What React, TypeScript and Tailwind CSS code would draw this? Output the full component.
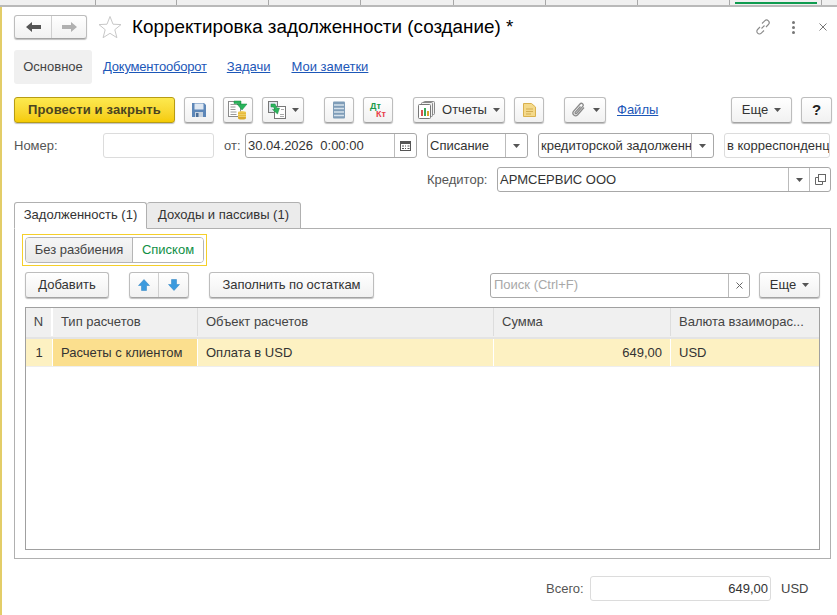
import React from "react";

const Caret = ({ c = "#555" }: { c?: string }) => (
  <svg width="7" height="4" viewBox="0 0 7 4" className="shrink-0"><path d="M0 0h7L3.5 4z" fill={c} /></svg>
);

const btn = "flex items-center justify-center h-[26px] rounded-[3px] border border-[#bdbdbd] border-b-[#a3a3a3] bg-gradient-to-b from-white to-[#f1f1f1] shadow-[0_1px_1px_rgba(0,0,0,0.25)] text-[#333] shrink-0";
const field = "flex items-center h-[25px] rounded-[3px] border bg-white text-[#333] shrink-0 overflow-hidden whitespace-nowrap";

const SaveIcon = () => (
  <svg width="16" height="16" viewBox="0 0 16 16"><path d="M1 1h12l2 2v12H1z" fill="#5d87b8" /><rect x="3.5" y="1.5" width="9" height="6" fill="#dfe8f2" /><rect x="4" y="10" width="8" height="5" fill="#c8d3df" /><rect x="5" y="11" width="2.5" height="4" fill="#4c6f98" /></svg>
);
const PostIcon = () => (
  <svg width="20" height="20" viewBox="0 0 20 20"><rect x="0.500" y="1.500" width="12" height="15" fill="#fff" stroke="#8a8a8a" /><path d="M2.500 4.500h8M2.500 7h5M2.500 9.500h5M2.500 12h6M2.500 14.500h6" stroke="#9a9a9a" /><path d="M6 1h7v3h-1l3 0h4l-5 6-5-6h2.500V3.500H6z" fill="#27b35a" stroke="#148a3f" strokeWidth=".5" /><ellipse cx="14" cy="12.500" rx="4" ry="1.500" fill="#f2cf5c" /><rect x="10" y="12.500" width="8" height="5.500" fill="#e7bb3c" /><ellipse cx="14" cy="18" rx="4" ry="1.500" fill="#d9a92c" /><path d="M10 14.500h8M10 16.500h8" stroke="#f4dc84" strokeWidth=".6" /></svg>
);
const CopyIcon = () => (
  <svg width="18" height="18" viewBox="0 0 18 18"><rect x="0.500" y="0.500" width="9" height="11" fill="#e3e8ee" stroke="#777" /><rect x="6.500" y="5.500" width="11" height="12" fill="#fff" stroke="#777" /><path d="M12 13.500h4M12 15.500h4M13 8.500h3" stroke="#aaa" /><path d="M3 3h4l2 4h2.500l-2 6-5-4.500H7L5.500 6H3z" fill="#2db45c" stroke="#178a41" strokeWidth=".5" /></svg>
);
const ListIcon = () => (
  <svg width="14" height="18" viewBox="0 0 14 18"><rect x="1" y="0.500" width="12" height="17" rx="1" fill="#7f9db8" /><path d="M2 4h10M2 7.500h10M2 11h10M2 14.500h10" stroke="#d6e2ec" strokeWidth="1.300" /></svg>
);
const ReportIcon = () => (
  <svg width="18" height="18" viewBox="0 0 18 18"><rect x="5.500" y="0.500" width="11" height="13" rx="1" fill="#f2f2f2" stroke="#888" /><rect x="3.500" y="1.500" width="11" height="14" rx="1" fill="#f2f2f2" stroke="#888" /><rect x="0.500" y="3.500" width="12" height="14" rx="1" fill="#fff" stroke="#777" /><rect x="3" y="9" width="2" height="6" fill="#d9534f" /><rect x="6" y="7" width="2" height="8" fill="#3aa757" /><rect x="9" y="10" width="2" height="5" fill="#d9a52c" /></svg>
);
const NoteIcon = () => (
  <svg width="13" height="14" viewBox="0 0 13 14"><path d="M.5.500h8l4 3.500v9.500H.5z" fill="#f4d98a" stroke="#d9b14e" /><path d="M3 6h7M3 8.500h7M3 11h5" stroke="#d3ad50" /></svg>
);
const ClipIcon = () => (
  <svg width="15" height="16" viewBox="0 0 15 16" fill="none" stroke="#8a8a8a" strokeWidth="1.300"><path d="M13 5.500 6.500 13a2.700 2.700 0 0 1-4-3.600L9 2a1.800 1.800 0 0 1 2.700 2.400L5.500 11.500a.9.900 0 0 1-1.300-1.200L9.500 4.500" /></svg>
);
const Arrow = ({ up }: { up?: boolean }) => (
  <svg width="12" height="12" viewBox="0 0 12 12" className={up ? "" : "rotate-180"}><path d="M6 0.500 11.500 6.500H8.500V11.500H3.500V6.500H0.500Z" fill="#3b9ade" stroke="#2a80c0" strokeWidth=".5" /></svg>
);

export default function App() {
  return (
    <div className="w-[837px] h-[615px] overflow-hidden bg-white flex flex-col font-['Liberation_Sans',Arial,sans-serif] text-[13px] text-[#333]">
      {/* top window strip */}
      <div className="h-[7px] shrink-0 flex bg-[#f0f0f0] border-b-2 border-[#b9b9b9]">
        {[96, 81, 92, 92, 93, 92, 92, 92].map((w, i) => (
          <div key={i} style={{ width: w }} className="border-r border-[#a8a8a8] shrink-0" />
        ))}
        <div className="w-[92px] border-r border-[#a8a8a8] pl-[5px] pr-[4px] shrink-0"><div className="h-[2px] mt-[2px] bg-[#0f9c50]" /></div>
      </div>

      <div className="flex-1 flex flex-col border-l-2 border-[#e3cd68] pl-[12px] pr-[5px] min-h-0">
        {/* title row */}
        <div className="flex items-center h-[24px] mt-[8px] shrink-0">
          <div className={btn + " w-[73px] !h-[24px] !justify-start"}>
            <div className="w-[37px] flex justify-center border-r border-[#d0d0d0] h-full items-center">
              <svg width="15" height="10" viewBox="0 0 15 10"><path d="M0 5 6 0v3h9v4H6v3z" fill="#555" /></svg>
            </div>
            <div className="flex-1 flex justify-center">
              <svg width="15" height="10" viewBox="0 0 15 10"><path d="M15 5 9 0v3H0v4h9v3z" fill="#b0b0b0" /></svg>
            </div>
          </div>
          <svg width="24" height="24" viewBox="0 0 24 24" className="ml-[11px]"><path d="M12 1.500 15 9.200l8 .4-6.200 5.100 2.100 8L12 18.300l-6.900 4.400 2.100-8L1 9.600l8-.4z" fill="#fff" stroke="#c8c8c8" /></svg>
          <div className="ml-[10px] pt-[1px] text-[18.850px] text-black whitespace-nowrap">Корректировка задолженности (создание) *</div>
          <div className="ml-auto flex items-center">
            <svg width="16" height="16" viewBox="0 0 16 16" fill="none" stroke="#8a8a8a" strokeWidth="1.100"><path d="M6.500 9.500 9.500 6.500M7 4.500 9.700 1.800a2.600 2.600 0 0 1 3.700 3.700L11 8M9 11.500 6.300 14.200a2.600 2.600 0 0 1-3.700-3.700L5 8" /></svg>
            <div className="ml-[21px] flex flex-col gap-[2px]">
              <div className="w-[3px] h-[3px] rounded-full bg-[#777]" /><div className="w-[3px] h-[3px] rounded-full bg-[#777]" /><div className="w-[3px] h-[3px] rounded-full bg-[#777]" />
            </div>
            <svg width="8" height="8" viewBox="0 0 8 8" className="ml-[24px] mr-[5px]" stroke="#777" strokeWidth="1"><path d="M.5.500l7 7M7.500.500l-7 7" /></svg>
          </div>
        </div>

        {/* page tabs */}
        <div className="flex items-center h-[34px] mt-[11px] shrink-0">
          <div className="w-[78px] h-full flex items-center justify-center rounded-[3px] bg-[#f0f0f0] text-[#444]">Основное</div>
          <a className="ml-[11px] text-[#1c57b8] underline tracking-[-0.2px]">Документооборот</a>
          <a className="ml-[20px] text-[#1c57b8] underline">Задачи</a>
          <a className="ml-[21px] text-[#1c57b8] underline">Мои заметки</a>
        </div>

        {/* toolbar */}
        <div className="flex items-center h-[26px] mt-[13px] shrink-0">
          <div className="flex items-center justify-center w-[161px] h-[26px] rounded-[3px] border border-[#b79c14] bg-gradient-to-b from-[#fde94e] to-[#f5cb00] shadow-[0_1px_1px_rgba(0,0,0,0.25)] font-bold text-[#4a4420] tracking-[0.15px]">Провести и закрыть</div>
          <div className={btn + " w-[30px] ml-[9px]"}><SaveIcon /></div>
          <div className={btn + " w-[30px] ml-[9px]"}><PostIcon /></div>
          <div className={btn + " w-[42px] ml-[9px] gap-[6px]"}><CopyIcon /><Caret /></div>
          <div className={btn + " w-[30px] ml-[20px]"}><ListIcon /></div>
          <div className={btn + " w-[30px] ml-[9px] flex-col !items-start pl-[6px]"}>
            <span className="text-[9px] leading-[8px] font-bold text-[#1a9a4a]">Дт</span>
            <span className="text-[9px] leading-[8px] font-bold text-[#e8404a] ml-[6px]">Кт</span>
          </div>
          <div className={btn + " w-[92px] ml-[20px] gap-[6px]"}><ReportIcon /><span>Отчеты</span><Caret /></div>
          <div className={btn + " w-[30px] ml-[9px]"}><NoteIcon /></div>
          <div className={btn + " w-[42px] ml-[20px] gap-[7px]"}><ClipIcon /><Caret /></div>
          <a className="ml-[11px] text-[#1c57b8] underline">Файлы</a>
          <div className={btn + " w-[61px] ml-auto gap-[6px]"}><span>Еще</span><Caret /></div>
          <div className={btn + " w-[31px] ml-[9px] font-bold text-[15px] !text-[#222]"}>?</div>
        </div>

        {/* number row */}
        <div className="flex items-center mt-[10px] shrink-0">
          <div className="w-[89px] text-[#555]">Номер:</div>
          <div className={field + " w-[111px] border-[#dcdcdc]"} />
          <div className="ml-[10px] w-[21px] text-[#555]">от:</div>
          <div className={field + " w-[172px] border-[#a8a8a8] pl-[2px] justify-between"}>
            <span className="whitespace-pre">30.04.2026  0:00:00</span>
            <div className="w-[22px] h-full border-l border-[#bbb] flex items-center justify-center">
              <svg width="11" height="11" viewBox="0 0 11 11"><rect x=".5" y="1.500" width="10" height="9" fill="#fff" stroke="#555" /><rect x="0" y="1" width="11" height="3" fill="#555" /><path d="M2 6h2M5 6h1M7.500 6h2M2 8.500h2M5 8.500h1M7.500 8.500h2" stroke="#555" /></svg>
            </div>
          </div>
          <div className={field + " w-[101px] ml-[10px] border-[#a8a8a8] pl-[2px] justify-between"}>
            <span>Списание</span>
            <div className="w-[22px] h-full border-l border-[#bbb] flex items-center justify-center"><Caret /></div>
          </div>
          <div className={field + " w-[176px] ml-[10px] border-[#a8a8a8] pl-[2px] justify-between"}>
            <span className="w-[152px] overflow-hidden">кредиторской задолженн</span>
            <div className="w-[22px] h-full border-l border-[#bbb] flex items-center justify-center"><Caret /></div>
          </div>
          <div className={field + " w-[106px] ml-[10px] border-[#dcdcdc] pl-[2px]"}>в корреспонденц</div>
        </div>

        {/* creditor row */}
        <div className="flex items-center justify-end mt-[9px] mr-[1px] shrink-0">
          <div className="w-[70px] text-[#555]">Кредитор:</div>
          <div className={field + " w-[334px] border-[#a8a8a8] pl-[2px]"}>
            <span className="flex-1">АРМСЕРВИС ООО</span>
            <div className="w-[21px] h-full border-l border-[#bbb] flex items-center justify-center"><Caret /></div>
            <div className="w-[21px] h-full border-l border-[#bbb] flex items-center justify-center">
              <svg width="11" height="11" viewBox="0 0 11 11" fill="none" stroke="#666"><rect x="3.500" y=".5" width="7" height="7" fill="#fff" /><path d="M3.500 3.500H.5v7h7V7.500" /></svg>
            </div>
          </div>
        </div>

        {/* tabs */}
        <div className="flex items-end h-[27px] mt-[10px] shrink-0 relative z-10 -mb-px">
          <div className="w-[133px] h-[27px] pb-[2px] flex items-center justify-center border border-[#b0b0b0] border-b-white bg-white rounded-t-[3px]">Задолженность (1)</div>
          <div className="w-[154px] h-[27px] pb-[2px] flex items-center justify-center border border-l-0 border-[#b0b0b0] bg-[#ebebeb] rounded-t-[3px]">Доходы и пассивы (1)</div>
        </div>

        {/* panel */}
        <div className="h-[331px] w-[817px] shrink-0 border border-[#b0b0b0] pl-[10px] pr-[10px] flex flex-col">
          <div className="w-[185px] h-[32px] mt-[5px] -ml-[3px] border border-[#f5cf2a] flex items-center pl-[2px] shrink-0">
            <div className="flex w-[179px] h-[26px] rounded-[4px] border border-[#b5b5b5] overflow-hidden">
              <div className="w-[107px] flex items-center justify-center bg-gradient-to-b from-[#f6f6f6] to-[#e9e9e9] border-r border-[#b5b5b5] text-[#444]">Без разбиения</div>
              <div className="flex-1 flex items-center justify-center bg-white text-[#0f8f45]">Списком</div>
            </div>
          </div>
          <div className="flex items-center mt-[6px] shrink-0">
            <div className={btn + " w-[84px]"}>Добавить</div>
            <div className={btn + " w-[60px] ml-[20px]"}>
              <div className="w-[30px] h-full flex items-center justify-center border-r border-[#d0d0d0]"><Arrow up /></div>
              <div className="w-[30px] h-full flex items-center justify-center"><Arrow /></div>
            </div>
            <div className={btn + " w-[165px] ml-[20px] tracking-[-0.1px]"}>Заполнить по остаткам</div>
            <div className={field + " w-[260px] ml-auto border-[#a8a8a8] pl-[3px] justify-between"}>
              <span className="text-[#a8a8a8]">Поиск (Ctrl+F)</span>
              <div className="w-[21px] h-full border-l border-[#bbb] flex items-center justify-center">
                <svg width="7" height="7" viewBox="0 0 7 7" stroke="#666" strokeWidth="1"><path d="M.5.500l6 6M6.500.500l-6 6" /></svg>
              </div>
            </div>
            <div className={btn + " w-[61px] ml-[9px] gap-[6px]"}><span>Еще</span><Caret /></div>
          </div>

          {/* table */}
          <div className="mt-[9px] h-[243px] border border-[#a0a0a0] flex flex-col shrink-0">
            <div className="flex h-[31px] pb-[1px] bg-[#f0f0f0] border-b-2 border-[#e4e4e4] text-[#444] shrink-0">
              <div className="w-[27px] border-r-2 border-[#fff] flex items-center justify-center">N</div>
              <div className="w-[145px] border-r border-[#ddd] flex items-center pl-[8px]">Тип расчетов</div>
              <div className="w-[296px] border-r border-[#ddd] flex items-center pl-[8px]">Объект расчетов</div>
              <div className="w-[177px] border-r border-[#ddd] flex items-center pl-[8px]">Сумма</div>
              <div className="flex-1 flex items-center pl-[8px]">Валюта взаиморас...</div>
            </div>
            <div className="flex h-[28px] bg-[#fdf1c2] border-b border-[#eeeeee] text-[#333] shrink-0">
              <div className="w-[27px] border-r border-[#fff] flex items-center justify-center">1</div>
              <div className="w-[145px] bg-[#fbdf8e] border-r border-[#fff] flex items-center pl-[8px]">Расчеты с клиентом</div>
              <div className="w-[296px] border-r border-[#fff] flex items-center pl-[8px]">Оплата в USD</div>
              <div className="w-[177px] border-r border-[#fff] flex items-center justify-end pr-[8px]">649,00</div>
              <div className="flex-1 flex items-center pl-[8px]">USD</div>
            </div>
          </div>
        </div>

        {/* total */}
        <div className="flex items-center mt-[17px] shrink-0">
          <span className="ml-[532px] w-[44px] text-[#555]">Всего:</span>
          <div className={field + " w-[181px] border-[#dcdcdc] justify-end pr-[2px]"}>649,00</div>
          <span className="ml-[10px] text-[#444]">USD</span>
        </div>
      </div>
    </div>
  );
}
